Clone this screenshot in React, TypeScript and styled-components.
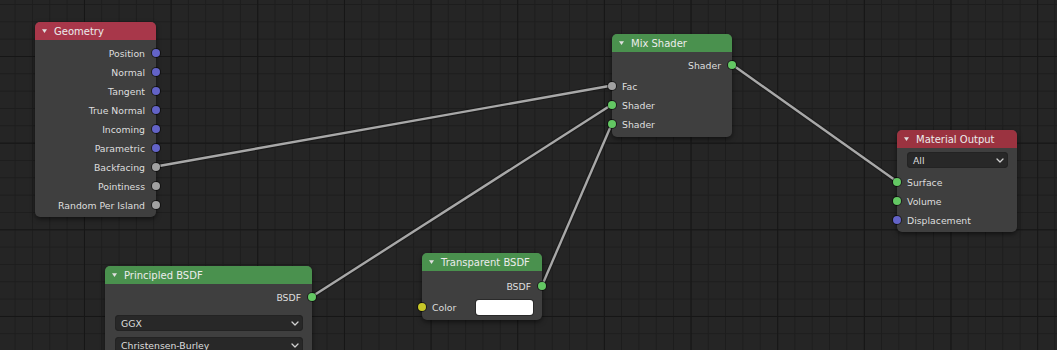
import React from "react";
import styled, { createGlobalStyle } from "styled-components";

const GlobalStyle = createGlobalStyle`
  *, *::before, *::after {
    box-sizing: border-box;
  }
  html, body {
    margin: 0;
    padding: 0;
    background: #252525;
  }
  body {
    font-family: "DejaVu Sans", "Liberation Sans", sans-serif;
  }
`;

type SocketKind = "vector" | "float" | "shader" | "color";

const socketColors: Record<SocketKind, string> = {
  vector: "#6363c7",
  float: "#a1a1a1",
  shader: "#63c763",
  color: "#c7c729",
};

// link endpoints, in canvas pixels
const links = [
  { x1: 156, y1: 166.5, x2: 612, y2: 85.5 },
  { x1: 312, y1: 296.5, x2: 612, y2: 104.5 },
  { x1: 542, y1: 285.5, x2: 612, y2: 123.5 },
  { x1: 732, y1: 64.5, x2: 897, y2: 181.5 },
];

const Triangle = () => (
  <svg width="7" height="6" viewBox="0 0 7 6">
    <polygon points="1,1.2 6,1.2 3.5,5" fill="#e0e0e0" />
  </svg>
);

const Chevron = () => (
  <svg width="8" height="5" viewBox="0 0 8 5">
    <polyline
      points="1,1 4,4 7,1"
      fill="none"
      stroke="#d0d0d0"
      strokeWidth="1.3"
      strokeLinecap="round"
      strokeLinejoin="round"
    />
  </svg>
);

interface NodeProps {
  title: string;
  x: number;
  y: number;
  width: number;
  headerColor: string;
  children: React.ReactNode;
}

const Node: React.FC<NodeProps> = (props) => {
  return (
    <StyledNode $x={props.x} $y={props.y} $w={props.width}>
      <NodeHeader $color={props.headerColor}>
        <Triangle />
        <HeaderTitle>{props.title}</HeaderTitle>
      </NodeHeader>
      {props.children}
    </StyledNode>
  );
};

const Output: React.FC<{ label: string; kind: SocketKind }> = ({ label, kind }) => (
  <SocketRow $side="out">
    {label}
    <Socket $side="out" $color={socketColors[kind]} />
  </SocketRow>
);

const Input: React.FC<{ label: string; kind: SocketKind; children?: React.ReactNode }> = ({
  label,
  kind,
  children,
}) => (
  <SocketRow $side="in">
    <Socket $side="in" $color={socketColors[kind]} />
    {label}
    {children}
  </SocketRow>
);

const Select: React.FC<{ value: string }> = ({ value }) => (
  <SelectRow>
    <SelectBox>
      <span>{value}</span>
      <Chevron />
    </SelectBox>
  </SelectRow>
);

const geometryOutputs: [string, SocketKind][] = [
  ["Position", "vector"],
  ["Normal", "vector"],
  ["Tangent", "vector"],
  ["True Normal", "vector"],
  ["Incoming", "vector"],
  ["Parametric", "vector"],
  ["Backfacing", "float"],
  ["Pointiness", "float"],
  ["Random Per Island", "float"],
];

export default function App() {
  return (
    <>
      <GlobalStyle />
      <Canvas>
        <Links width="1057" height="350" viewBox="0 0 1057 350">
          {links.map((l, i) => (
            <g key={i}>
              <line x1={l.x1} y1={l.y1} x2={l.x2} y2={l.y2} stroke="#1b1b1b" strokeWidth="4.5" />
              <line x1={l.x1} y1={l.y1} x2={l.x2} y2={l.y2} stroke="#a8a8a8" strokeWidth="2.4" />
            </g>
          ))}
        </Links>

        <Node title="Geometry" x={35} y={22} width={121} headerColor="#a8374a">
          <Spacer $h={3} />
          {geometryOutputs.map(([label, kind]) => (
            <Output key={label} label={label} kind={kind} />
          ))}
          <Spacer $h={3} />
        </Node>

        <Node title="Mix Shader" x={612} y={34} width={120} headerColor="#4a914e">
          <Spacer $h={3} />
          <Output label="Shader" kind="shader" />
          <Spacer $h={2} />
          <Input label="Fac" kind="float" />
          <Input label="Shader" kind="shader" />
          <Input label="Shader" kind="shader" />
          <Spacer $h={4} />
        </Node>

        <Node title="Material Output" x={897} y={130} width={120} headerColor="#9b3340">
          <Spacer $h={2} />
          <Select value="All" />
          <Spacer $h={2} />
          <Input label="Surface" kind="shader" />
          <Input label="Volume" kind="shader" />
          <Input label="Displacement" kind="vector" />
          <Spacer $h={3} />
        </Node>

        <Node title="Principled BSDF" x={105} y={266} width={207} headerColor="#4a914e">
          <Spacer $h={3} />
          <Output label="BSDF" kind="shader" />
          <Spacer $h={7} />
          <Select value="GGX" />
          <Spacer $h={2} />
          <Select value="Christensen-Burley" />
          <Spacer $h={40} />
        </Node>

        <Node title="Transparent BSDF" x={422} y={253} width={120} headerColor="#4a914e">
          <Spacer $h={5} />
          <Output label="BSDF" kind="shader" />
          <Spacer $h={2} />
          <Input label="Color" kind="color">
            <Swatch />
          </Input>
          <Spacer $h={4} />
        </Node>
      </Canvas>
    </>
  );
}

const Canvas = styled.div`
  position: relative;
  width: 1057px;
  height: 350px;
  overflow: hidden;
  background-color: #252525;
  background-image: linear-gradient(to right, #161616 1px, transparent 1px),
    linear-gradient(to bottom, #161616 1px, transparent 1px),
    linear-gradient(to right, #1d1d1d 1px, transparent 1px),
    linear-gradient(to bottom, #1d1d1d 1px, transparent 1px);
  background-size: 86.667px 86.667px, 86.667px 86.667px, 17.333px 17.333px,
    17.333px 17.333px;
  background-position: 84px 0, 0 56px, 14.6px 0, 0 4px;
`;

const Links = styled.svg`
  position: absolute;
  left: 0;
  top: 0;
  z-index: 1;
`;

const StyledNode = styled.div<{ $x: number; $y: number; $w: number }>`
  position: absolute;
  left: ${(p) => p.$x}px;
  top: ${(p) => p.$y}px;
  width: ${(p) => p.$w}px;
  z-index: 2;
  background: #3f3f3f;
  border-radius: 5px;
  box-shadow: 0 2px 5px rgba(0, 0, 0, 0.55);
  color: #dedede;
  font-size: 9.3px;
`;

const NodeHeader = styled.div<{ $color: string }>`
  height: 18px;
  display: flex;
  align-items: center;
  gap: 6px;
  padding-left: 6px;
  background: ${(p) => p.$color};
  border-radius: 5px 5px 0 0;
  color: #ececec;
  font-size: 10px;
`;

const HeaderTitle = styled.span`
  line-height: 18px;
  padding-top: 1px;
`;

const Spacer = styled.div<{ $h: number }>`
  height: ${(p) => p.$h}px;
`;

const SocketRow = styled.div<{ $side: "in" | "out" }>`
  position: relative;
  height: 19px;
  display: flex;
  align-items: center;
  justify-content: ${(p) => (p.$side === "out" ? "flex-end" : "flex-start")};
  padding: ${(p) => (p.$side === "out" ? "1px 11px 0 0" : "1px 0 0 10px")};
  white-space: nowrap;
`;

const Socket = styled.span<{ $side: "in" | "out"; $color: string }>`
  position: absolute;
  top: 50%;
  ${(p) => (p.$side === "out" ? "right: -4px;" : "left: -4px;")}
  width: 8px;
  height: 8px;
  margin-top: -4px;
  border-radius: 50%;
  background: ${(p) => p.$color};
  box-shadow: 0 0 0 1px rgba(0, 0, 0, 0.55);
`;

const SelectRow = styled.div`
  height: 20px;
  display: flex;
  align-items: center;
  padding: 0 9px 0 10px;
`;

const SelectBox = styled.div`
  flex: 1;
  height: 16px;
  display: flex;
  align-items: center;
  justify-content: space-between;
  padding: 0 4px 0 6px;
  background: #282828;
  border-radius: 4px;
  box-shadow: inset 0 0 0 1px #232323;
  color: #dedede;
`;

const Swatch = styled.div`
  margin-left: auto;
  margin-right: 9px;
  width: 57px;
  height: 15px;
  border-radius: 3px;
  background: #ffffff;
  box-shadow: 0 0 0 1px #2a2a2a;
`;
